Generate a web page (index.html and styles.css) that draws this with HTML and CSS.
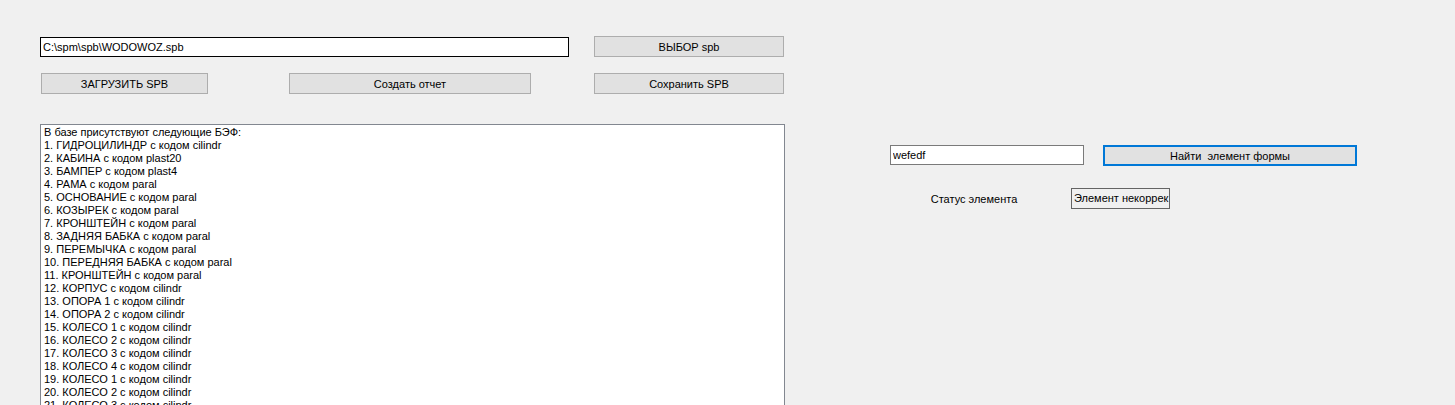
FILE: index.html
```html
<!DOCTYPE html>
<html lang="ru">
<head>
<meta charset="UTF-8" />
<title>SPB</title>
<link rel="stylesheet" href="styles.css">
</head>
<body>
  <div class="form">
    <div class="left">
      <div class="row">
        <input class="text path" type="text" value="C:\spm\spb\WODOWOZ.spb">
        <button type="button" class="btn btn-pick">ВЫБОР spb</button>
      </div>
      <div class="row row-actions">
        <button type="button" class="btn btn-load">ЗАГРУЗИТЬ SPB</button>
        <button type="button" class="btn btn-report">Создать отчет</button>
        <button type="button" class="btn btn-save">Сохранить SPB</button>
      </div>
      <div class="list" id="list"></div>
    </div>

    <div class="right">
      <div class="row">
        <input class="text search" type="text" value="wefedf">
        <button type="button" class="btn btn-find">Найти&nbsp; элемент формы</button>
      </div>
      <div class="row row-status">
        <span class="status-label">Статус элемента</span>
        <span class="status-box">Элемент некоррек</span>
      </div>
    </div>
  </div>

<script>
  (function() {
    const items = [
      'ГИДРОЦИЛИНДР с кодом cilindr',
      'КАБИНА с кодом plast20',
      'БАМПЕР с кодом plast4',
      'РАМА с кодом paral',
      'ОСНОВАНИЕ с кодом paral',
      'КОЗЫРЕК с кодом paral',
      'КРОНШТЕЙН с кодом paral',
      'ЗАДНЯЯ БАБКА с кодом paral',
      'ПЕРЕМЫЧКА с кодом paral',
      'ПЕРЕДНЯЯ БАБКА с кодом paral',
      'КРОНШТЕЙН с кодом paral',
      'КОРПУС с кодом cilindr',
      'ОПОРА 1 с кодом cilindr',
      'ОПОРА 2 с кодом cilindr',
      'КОЛЕСО 1 с кодом cilindr',
      'КОЛЕСО 2 с кодом cilindr',
      'КОЛЕСО 3 с кодом cilindr',
      'КОЛЕСО 4 с кодом cilindr',
      'КОЛЕСО 1 с кодом cilindr',
      'КОЛЕСО 2 с кодом cilindr',
      'КОЛЕСО 3 с кодом cilindr'
    ];
    const list = document.getElementById('list');
    const lines = ['В базе присутствуют следующие БЭФ:'];
    items.forEach((name, i) => lines.push((i + 1) + '. ' + name));
    lines.forEach(text => {
      const div = document.createElement('div');
      div.className = 'line';
      div.textContent = text;
      list.appendChild(div);
    });
  })();
</script>
</body>
</html>
```

FILE: styles.css
```css
:root {
  --bg: #f0f0f0;
  --btn: #e1e1e1;
  --btn-border: #adadad;
  --field-border: #7a7a7a;
  --focus: #0078d7;
  --text: #000;
}

* {
  box-sizing: border-box;
}

body {
  margin: 0;
  height: 100vh;
  overflow: hidden;
  background: var(--bg);
  font-family: 'Liberation Sans', Arial, sans-serif;
  font-size: 11px;
  color: var(--text);
}

.form {
  display: flex;
}

.left {
  margin-left: 40px;
  padding-top: 36px;
  width: 745px;
}

.row {
  display: flex;
  align-items: flex-start;
}

.text {
  font: inherit;
  color: var(--text);
  background: #fff;
  border: 1px solid var(--field-border);
  margin: 0;
  padding: 0 2px;
  outline: none;
}

.path {
  width: 529px;
  height: 20px;
  margin-top: 1px;
  border-color: #000;
}

.btn {
  font: inherit;
  color: var(--text);
  background: var(--btn);
  border: 1px solid var(--btn-border);
  margin: 0;
  padding: 0;
  height: 21px;
}

.btn-pick {
  width: 190px;
  margin-left: 25px;
}

.row-actions {
  margin-top: 16px;
}

.btn-load {
  width: 167px;
  margin-left: 1px;
}

.btn-report {
  width: 242px;
  margin-left: 81px;
}

.btn-save {
  width: 190px;
  margin-left: 63px;
}

.list {
  margin-top: 30px;
  width: 745px;
  height: 300px;
  background: #fff;
  border: 1px solid #828790;
  padding: 1px 3px;
  overflow: hidden;
}

.line {
  line-height: 13px;
  white-space: nowrap;
}

.right {
  margin-left: 105px;
  padding-top: 145px;
}

.search {
  width: 194px;
  height: 20px;
}

.btn-find {
  width: 254px;
  height: 21px;
  margin-left: 19px;
  border: 2px solid var(--focus);
}

.row-status {
  margin-top: 22px;
  align-items: center;
}

.status-label {
  width: 100px;
  margin-left: 34px;
  text-align: center;
  white-space: nowrap;
}

.status-box {
  width: 99px;
  margin-left: 47px;
  border: 1px solid #646464;
  padding: 3px 0 3px 2px;
  line-height: 13px;
  white-space: nowrap;
  overflow: hidden;
}
```
